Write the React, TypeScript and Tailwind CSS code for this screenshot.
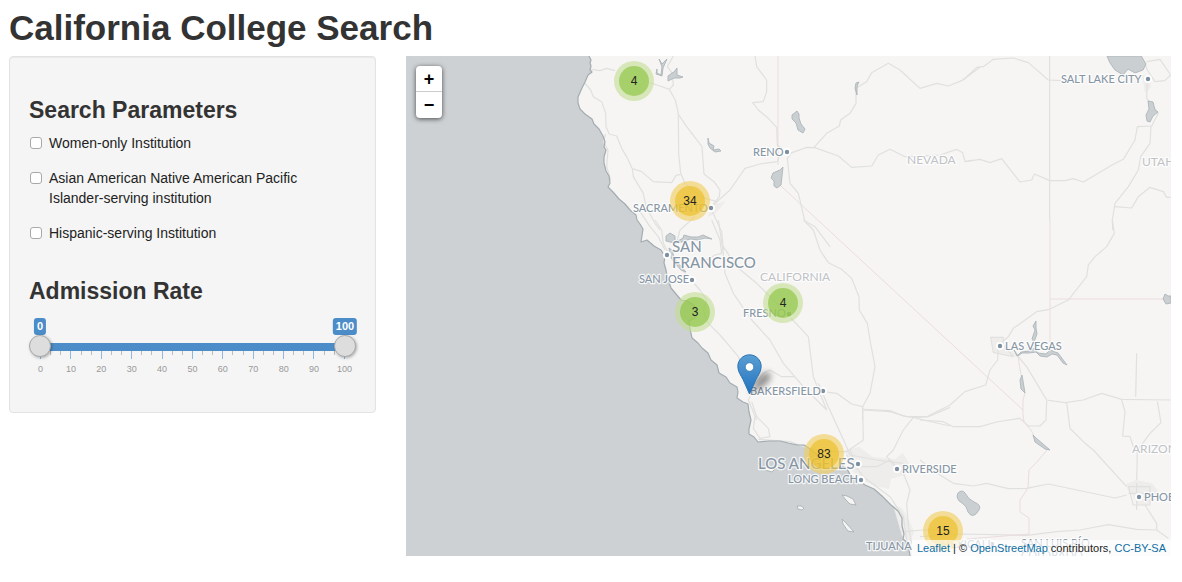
import { useState } from "react";

type Tile = { x: number; y: number; roads: string[] };

const COAST =
  "M589 56L591 60L590 63L591 66L590 70L592 72L588 75L585 82L582 88L578 97L578 103L580 109L585 114L592 119L594 124L599 129L603 136L605 142L604 147L606 150L604 157L604 163L606 171L609 176L610 183L608 187L613 192L619 199L625 204L630 210L636 215L637 220L640 224L643 229L641 242L647 240L654 246L661 250L665 256L664 263L666 270L667 276L671 288L676 294L681 300L687 301L692 304L696 308L697 314L695 318L689 321L690 329L692 338L698 343L702 348L708 353L711 360L717 365L719 373L726 377L730 383L737 387L738 392L737 398L743 402L748 404L749 412L751 420L749 429L749 434L754 437L758 442L769 441L780 441L788 443L797 445L804 445L810 449L817 454L820 461L822 468L833 470L843 466L847 469L851 476L858 480L865 485L874 489L882 496L891 505L898 511L902 518L902 526L904 534L903 539L908 543L910 556";

const LAKES = [
  "M797 111l2 3l0 4l2 6l4 5l-2 4l-5 -3l-2 -7l-4 -4l0 -4z",
  "M780 170l3 -3l-1 9l-1 9l-4 3l-3 -2l0 -5l-3 -3l2 -5z",
  "M1107 56h34l5 8l-3 6l-8 3l-7 -4l-5 6l-8 -5l-5 -7z",
  "M1148 101l5 1l2 8l3 2l-5 4l-3 6l-3 -1l-1 -6l3 -6z",
  "M958 493q4 -4 7 0q3 6 9 9q8 3 5 8q-6 10 -11 2q-1 -6 -6 -9q-7 -4 -4 -10z",
  "M1163 299l2 -5l3 2l3 0v7l-5 1z",
  "M666 236l4 -3l5 3l0 4l3 1l5 -3l1 -3l7 2l7 0l5 -2l9 4l-7 -1l-7 2l-8 -1l-8 3l-7 1l-5 -1l-4 -1z",
  "M669 248l3 2l2 7l4 6l8 9l-5 -2l-7 -8l-4 -6z",
  "M657 69l0 4l4 2l1 -8l-3 -8l3 5l5 -5l-4 9l-1 8l-6 -2z",
  "M668 76l4 -3l2 -1l3 -4l0 7l6 2l-3 1l-6 0l-6 3z",
  "M708 138l1 5l5 3l-1 4l6 -1l2 2l-6 1l-5 -4l-2 -4z",
  "M859 82l-3 1l-1 5l2 7l0 -8l1 -3z",
  "M1036 321l-3 5l2 4l-3 9l2 3l3 -8l-1 -6z",
  "M1014 350l3 6l4 -4l8 -1l5 -3l4 5l8 1l4 -4l8 3l9 12l-4 -2l-6 -8l-5 -1l-5 3l-7 -1l-4 -4l-7 1l-7 0l-4 3z",
  "M1022 375l-2 5l1 9l4 4l-1 -6z",
  "M1033 435l3 3l14 12l-5 -1l-10 -7z",
];

const ISLANDS = [
  "M842 495l5 1l6 3l3 6l-6 -1l-4 -4z",
  "M842 519l4 4l8 9l-6 -1l-5 -7z",
  "M797 506l4 0l3 2l-2 2l-4 -1z",
  "M758 463l5 4l6 0l6 2l-3 3l-7 -2z",
];

const URBAN = [
  "M845 450l14 -3l14 10l22 2l8 -6l6 10l-4 12l-14 4l-2 10l-14 -3l-18 -8l-8 -14z",
  "M893 505l9 3l8 14l4 10l-4 10l-8 -6z",
  "M1126 484l10 -4l16 3l6 8l-3 8l-9 7l-9 -2l-4 -8l-5 -5z",
  "M712 205l14 -4l-10 12l-8 4z",
  "M991 338h12v6l10 7l4 6l-10 -3l-13 -2z",
  "M1142 75l8 0l1 12l-6 6z",
];

const BORDERS = [
  "M778 56V165",
  "M781 186L1023 410",
  "M1050 220V343",
  "M1050 299H1163",
  "M1018 357L1021 375M1025 393L1023 400L1023 415L1024 422L1031 430L1034 436M1047 450L1037 462L1029 470L1028 488L1020 500L1020 512L1029 518L1029 534L967 539",
];

const TILES: Tile[] = [
  {
    x: 400,
    y: 50,
    roads: [
      "M574 58L600 62L620 55L645 62",
      "M555 100L572 120L580 140L605 155L617 190L618 230L628 252L650 258L665 295L680 320L697 356",
      "M617 252L610 275L624 300L620 350L632 390",
      "M697 356L700 380L730 430L738 470L765 520L780 540",
    ],
  },
  {
    x: 570,
    y: 50,
    roads: [
      "M238 98L270 108L298 118L310 105L307 70L292 50L310 18",
      "M298 118L316 150L325 190L326 310L332 370L345 400L390 440L440 455",
      "M323 190L350 230L396 290L402 372L432 395L450 420L448 440L425 470",
      "M187 356L215 365L250 395L305 398L318 376L332 373",
      "M425 470L480 420L525 355L570 342L622 335L632 310",
      "M555 18L560 50L590 90L590 125L580 155L548 158L565 180L595 205L620 232L622 285L640 300L660 310L710 292L735 293",
      "M665 308L652 325L660 400L685 430L705 515L730 540L750 600",
      "M425 480L455 545L460 600",
      "M375 500L330 540L322 570",
      "M200 470L240 530L265 560L285 600",
    ],
  },
  {
    x: 570,
    y: 220,
    roads: [
      "M255 0L275 30L280 70L300 110L350 165L390 210L410 240L400 270L415 310L450 345L480 380L505 410L550 510L535 540L560 600",
      "M425 0L450 60L455 100L435 105L410 120",
      "M460 80L500 140L560 190L640 270L715 350L730 470L770 570",
      "M445 0L460 100L465 160L490 220L545 300L600 360L640 430L700 500L770 570",
      "M540 510L580 460L600 450L635 470L675 470",
      "M700 0L735 20L780 80",
    ],
  },
  {
    x: 690,
    y: 380,
    roads: [
      "M185 65L200 110L235 145L240 170L210 175L190 145L195 110",
      "M205 178L300 185L340 200L400 215L470 215L520 180L518 85",
      "M385 10L415 80L465 190L480 225L560 240L640 250",
      "M518 88L600 92L640 108L670 112L715 110L780 82",
      "M670 112L640 150L610 210L590 230L640 280L660 330L650 370L655 440L665 490",
      "M670 112L700 120L780 138",
      "M470 225L520 290L600 350L640 410L650 480",
      "M480 210L500 260L560 260L600 240L620 270",
      "M640 455L700 450L780 450",
    ],
  },
  {
    x: 740,
    y: 50,
    roads: [
      "M222 292L260 250L298 228L302 210L330 190L348 160L348 115L380 95L395 68L445 40L480 60L540 115L590 100L625 108L665 92L720 52",
      "M222 292L295 318L335 352L395 348L415 315L450 298L495 320L600 315L650 298L668 308L675 335L700 330",
    ],
  },
  {
    x: 920,
    y: 50,
    roads: [
      "M130 90L170 52L190 50L220 28L280 24L325 38L385 90L425 92",
      "M135 335L180 328L210 338L245 326L300 396L335 390L343 372L390 392L435 392L460 386L490 396L580 343L610 328L645 270L652 230L695 228L715 190L680 145L682 90",
      "M693 228L690 280L662 320L655 360L625 410L585 460L577 510L578 540",
      "M585 470L635 474L655 440L690 412L730 425L740 442L752 442",
      "M665 18L682 60L705 95L735 92L752 75",
      "M680 35L720 28L752 75",
      "M389 18V510",
    ],
  },
  {
    x: 820,
    y: 220,
    roads: [
      "M0 90L25 128L65 148L95 175L117 230L118 270L142 310L150 360L165 440L150 520L128 560",
      "M10 515L50 520L95 552L128 560L128 600",
      "M128 570L210 575L260 590L320 590L390 555L435 515L497 495L510 450L533 420L535 375L565 350L580 325L650 275L688 268L745 240L800 170L805 135L825 110L860 80L883 40L877 0",
      "M590 405L620 440L680 540L735 548L790 540L845 520L905 538L1052 540",
      "M950 400L947 530",
      "M512 352H550V375L580 410L520 397Z",
    ],
  },
  {
    x: 920,
    y: 380,
    roads: [
      "M0 120L70 125L100 140L180 140L230 126L300 115L325 138L360 138L378 120L380 62",
      "M440 68L450 145L490 185L520 210L620 320",
      "M605 60L615 95L608 168L630 170L640 200L652 220L650 300",
      "M712 65L723 128L690 160L650 215",
      "M0 240L60 285L100 310L160 318L200 310L265 326L320 325L385 312L585 354L620 345",
      "M675 375L710 430V450L745 475",
      "M0 470L130 462L320 466L410 455L480 450L565 434L650 448L710 450",
      "M625 320H690V375H640ZM650 310V390M625 340H690",
    ],
  },
];

type Place = {
  name: string;
  x: number;
  y: number;
  kind: "city" | "metro" | "state";
  dot?: [number, number];
};

const PLACES: Place[] = [
  { name: "SALT LAKE CITY", x: 1061, y: 83, kind: "city", dot: [1148, 79] },
  { name: "RENO", x: 753, y: 156, kind: "city", dot: [787, 152] },
  { name: "NEVADA", x: 907, y: 164, kind: "state" },
  { name: "UTAH", x: 1142, y: 166, kind: "state" },
  { name: "SACRAMENTO", x: 633, y: 212, kind: "city", dot: [711, 208] },
  { name: "SAN", x: 672, y: 252, kind: "metro", dot: [667, 255] },
  { name: "FRANCISCO", x: 672, y: 268, kind: "metro" },
  { name: "SAN JOSE", x: 639, y: 283, kind: "city", dot: [692, 280] },
  { name: "CALIFORNIA", x: 760, y: 281, kind: "state" },
  { name: "FRESNO", x: 743, y: 317, kind: "city", dot: [789, 314] },
  { name: "BAKERSFIELD", x: 750, y: 395, kind: "city", dot: [823, 391] },
  { name: "LAS VEGAS", x: 1005, y: 350, kind: "city", dot: [1000, 346] },
  { name: "LOS ANGELES", x: 758, y: 469, kind: "metro", dot: [858, 464] },
  { name: "LONG BEACH", x: 788, y: 483, kind: "city", dot: [861, 480] },
  { name: "RIVERSIDE", x: 902, y: 473, kind: "city", dot: [897, 469] },
  { name: "TIJUANA", x: 866, y: 550, kind: "city" },
  { name: "MEXICALI", x: 940, y: 548, kind: "city", dot: [992, 544] },
  { name: "SAN LUIS RÍO", x: 1021, y: 547, kind: "city" },
  { name: "COLORADO", x: 1021, y: 559, kind: "city" },
  { name: "ARIZONA", x: 1132, y: 453, kind: "state" },
  { name: "PHOENIX", x: 1144, y: 501, kind: "city", dot: [1139, 497] },
];

const PLACE_STYLE = {
  city: "fill-[#8796a4] text-[11px] font-medium",
  metro: "fill-[#8796a4] text-[15px] font-medium",
  state: "fill-[#c0c3c6] text-[12px]",
};

// Positions are offsets of the cluster centre inside the map.
const CLUSTERS = [
  { count: 4, x: 228, y: 25 },
  { count: 34, x: 284, y: 145 },
  { count: 3, x: 289, y: 256 },
  { count: 4, x: 377, y: 247 },
  { count: 83, x: 418, y: 398 },
  { count: 15, x: 537, y: 475 },
];

const FILTERS = [
  { id: "women-only", label: "Women-only Institution" },
  {
    id: "aanapi",
    label: "Asian American Native American Pacific Islander-serving institution",
  },
  { id: "hispanic", label: "Hispanic-serving Institution" },
];

function BaseMap() {
  return (
    <svg
      viewBox="406 56 765 500"
      preserveAspectRatio="xMinYMin slice"
      className="block h-full w-full"
      role="img"
      aria-label="Map of California"
    >
      <rect x="406" y="56" width="765" height="500" fill="#cdd1d4" />
      <path d={COAST + "H1171V56Z"} fill="#f6f5f4" />
      <g fill="#eeedec">
        {URBAN.map((d) => (
          <path key={d} d={d} />
        ))}
      </g>
      <g fill="none" stroke="#e0e0df" strokeWidth="1.2" strokeLinejoin="round">
        {TILES.map((t) => (
          <g key={`${t.x}-${t.y}`} transform={`translate(${t.x} ${t.y}) scale(0.33333)`}>
            {t.roads.map((d) => (
              <path key={d} d={d} vectorEffect="non-scaling-stroke" />
            ))}
          </g>
        ))}
      </g>
      <g fill="none" stroke="#ebdcdd" strokeWidth="1">
        {BORDERS.map((d) => (
          <path key={d} d={d} />
        ))}
      </g>
      <path d={COAST} fill="none" stroke="#a3acb0" strokeWidth="1.2" strokeLinejoin="round" />
      <g fill="#cacfd2" stroke="#adb6ba" strokeWidth="0.9" strokeLinejoin="round">
        {LAKES.map((d) => (
          <path key={d} d={d} />
        ))}
      </g>
      <g fill="#f6f5f4" stroke="#a3acb0" strokeWidth="0.8" strokeLinejoin="round">
        {ISLANDS.map((d) => (
          <path key={d} d={d} />
        ))}
      </g>
      <g className="font-['Lato',sans-serif]">
        {PLACES.map((p) => (
          <g key={p.name}>
            {p.dot && (
              <>
                <circle cx={p.dot[0]} cy={p.dot[1]} r="4" fill="#ffffff" />
                <circle cx={p.dot[0]} cy={p.dot[1]} r="2.2" fill="#7d8fa0" />
              </>
            )}
            <text
              x={p.x}
              y={p.y}
              stroke="#ffffff"
              strokeOpacity="0.8"
              strokeWidth="2.5"
              strokeLinejoin="round"
              paintOrder="stroke"
              className={PLACE_STYLE[p.kind]}
            >
              {p.name}
            </text>
          </g>
        ))}
      </g>
    </svg>
  );
}

function Pin() {
  return (
    <svg width="45" height="41" viewBox="0 0 45 41" aria-hidden="true">
      <defs>
        <linearGradient id="pin-fill" x1="0" y1="0" x2="0" y2="1">
          <stop offset="0" stopColor="#5a9fd4" />
          <stop offset="1" stopColor="#2272bf" />
        </linearGradient>
        <filter id="pin-blur" x="-50%" y="-50%" width="200%" height="200%">
          <feGaussianBlur stdDeviation="3" />
        </filter>
      </defs>
      <path d="M13 40L19 26Q27 16 33 19Q36 25 27 32Z" fill="#000" opacity="0.4" filter="url(#pin-blur)" />
      <path
        d="M12.5 .8C6 .8 .8 6 .8 12.5C.8 17.5 4 21.5 6 25.5L12.5 40L19 25.5C21 21.5 24.2 17.5 24.2 12.5C24.2 6 19 .8 12.5 .8Z"
        fill="url(#pin-fill)"
        stroke="#2f75b0"
        strokeWidth="1"
      />
      <circle cx="12.5" cy="13" r="4.3" fill="#fff" stroke="#3478b3" strokeWidth="0.8" />
    </svg>
  );
}

function CollegeMap() {
  return (
    <section aria-label="College map" className="relative h-[500px] overflow-hidden bg-[#cdd1d4]">
      <BaseMap />
      {CLUSTERS.map((c) => (
        <button
          key={`${c.x}-${c.y}`}
          type="button"
          style={{ left: c.x, top: c.y }}
          className={
            "absolute flex size-10 -translate-x-1/2 -translate-y-1/2 items-center justify-center rounded-full " +
            (c.count < 10 ? "bg-[#c3de91]/60" : "bg-[#f2cd57]/60")
          }
        >
          <span
            className={
              "flex size-[30px] items-center justify-center rounded-full text-xs text-[#222] " +
              (c.count < 10 ? "bg-[#85c235]/60" : "bg-[#ebbc1c]/60")
            }
          >
            {c.count}
          </span>
        </button>
      ))}
      <button
        type="button"
        aria-label="College"
        className="absolute left-[331px] top-[298px]"
      >
        <Pin />
      </button>
      <div className="absolute left-2.5 top-2.5 flex w-[26px] flex-col rounded-sm bg-white text-lg font-bold leading-none text-black shadow-[0_1px_5px_rgba(0,0,0,0.65)]">
        <button type="button" aria-label="Zoom in" className="h-[26px] border-b border-[#ccc]">
          +
        </button>
        <button type="button" aria-label="Zoom out" className="h-[26px]">
          −
        </button>
      </div>
      <p className="absolute bottom-0 right-0 bg-white/70 px-[5px] text-[11px] leading-4 text-[#222]">
        <a href="#leaflet" className="text-[#0f6ea3]">Leaflet</a>
        {" | © "}
        <a href="#osm" className="text-[#0f6ea3]">OpenStreetMap</a>
        {" contributors, "}
        <a href="#license" className="text-[#0f6ea3]">CC-BY-SA</a>
      </p>
    </section>
  );
}

const RANGE_CLASS =
  "pointer-events-none absolute inset-0 m-0 h-[22px] w-full appearance-none bg-transparent [&::-webkit-slider-thumb]:pointer-events-auto [&::-webkit-slider-thumb]:size-[22px] [&::-webkit-slider-thumb]:appearance-none [&::-webkit-slider-thumb]:rounded-full [&::-webkit-slider-thumb]:border [&::-webkit-slider-thumb]:border-[#aaa] [&::-webkit-slider-thumb]:bg-[#ddd] [&::-webkit-slider-thumb]:shadow-[1px_1px_3px_rgba(0,0,0,0.3)]";

function AdmissionSlider() {
  const [low, setLow] = useState(0);
  const [high, setHigh] = useState(100);
  return (
    <div className="pt-[13px]">
      <div className="relative mx-[11px] h-[17px]">
        {[low, high].map((value, i) => (
          <output
            key={i}
            style={{ left: `${value}%` }}
            className="absolute -translate-x-1/2 rounded-[3px] bg-[#4c8dc9] px-[3px] text-[11px] font-bold leading-[17px] text-white"
          >
            {value}
          </output>
        ))}
      </div>
      <div className="relative h-[22px] px-[11px] pt-2">
        <div className="h-2 bg-[#ddd]">
          <div
            style={{ marginLeft: `${low}%`, width: `${high - low}%` }}
            className="h-2 bg-[#4c8dc9]"
          />
        </div>
        <div className="flex justify-between">
          {Array.from({ length: 31 }, (_, i) => (
            <span
              key={i}
              className={i % 3 === 0 ? "h-2 w-px bg-[#8fb8dc]" : "h-1 w-px bg-[#bbb]"}
            />
          ))}
        </div>
        <input
          type="range"
          aria-label="Minimum admission rate"
          min={0}
          max={100}
          value={low}
          onChange={(e) => setLow(Math.min(Number(e.target.value), high))}
          className={RANGE_CLASS}
        />
        <input
          type="range"
          aria-label="Maximum admission rate"
          min={0}
          max={100}
          value={high}
          onChange={(e) => setHigh(Math.max(Number(e.target.value), low))}
          className={RANGE_CLASS}
        />
      </div>
      <div className="mx-[11px] flex justify-between pt-1.5 text-[9px] leading-3 text-[#999]">
        {Array.from({ length: 11 }, (_, i) => (
          <span key={i} className="flex w-px justify-center">
            {i * 10}
          </span>
        ))}
      </div>
    </div>
  );
}

export default function App() {
  return (
    <main className="pl-[9px] pr-[11px] font-['Liberation_Sans',Arial,sans-serif] text-sm leading-5 text-[#222]">
      <h1 className="pb-2 pt-2 text-[35px] font-bold leading-10 text-[#333]">
        California College Search
      </h1>
      <div className="grid grid-cols-[367fr_765fr] items-start gap-[30px]">
        <form className="rounded-sm border border-[#e3e3e3] bg-[#f5f5f5] px-[19px] pb-[37px] pt-10 shadow-[inset_0_1px_1px_rgba(0,0,0,0.05)]">
          <h2 className="text-[23px] font-bold leading-[27px] text-[#333]">Search Parameters</h2>
          <div className="flex flex-col gap-[15px] pt-[9px]">
            {FILTERS.map((f) => (
              <label key={f.id} htmlFor={f.id} className="flex items-start gap-[7px] pl-px">
                <input
                  id={f.id}
                  type="checkbox"
                  className="mt-1 size-3 shrink-0 appearance-none rounded-[3px] border border-[#a9a9a9] bg-white checked:bg-[#428bca]"
                />
                <span className="max-w-[270px]">{f.label}</span>
              </label>
            ))}
          </div>
          <h2 className="pt-[35px] text-[23px] font-bold leading-[27px] text-[#333]">
            Admission Rate
          </h2>
          <AdmissionSlider />
        </form>
        <CollegeMap />
      </div>
    </main>
  );
}
